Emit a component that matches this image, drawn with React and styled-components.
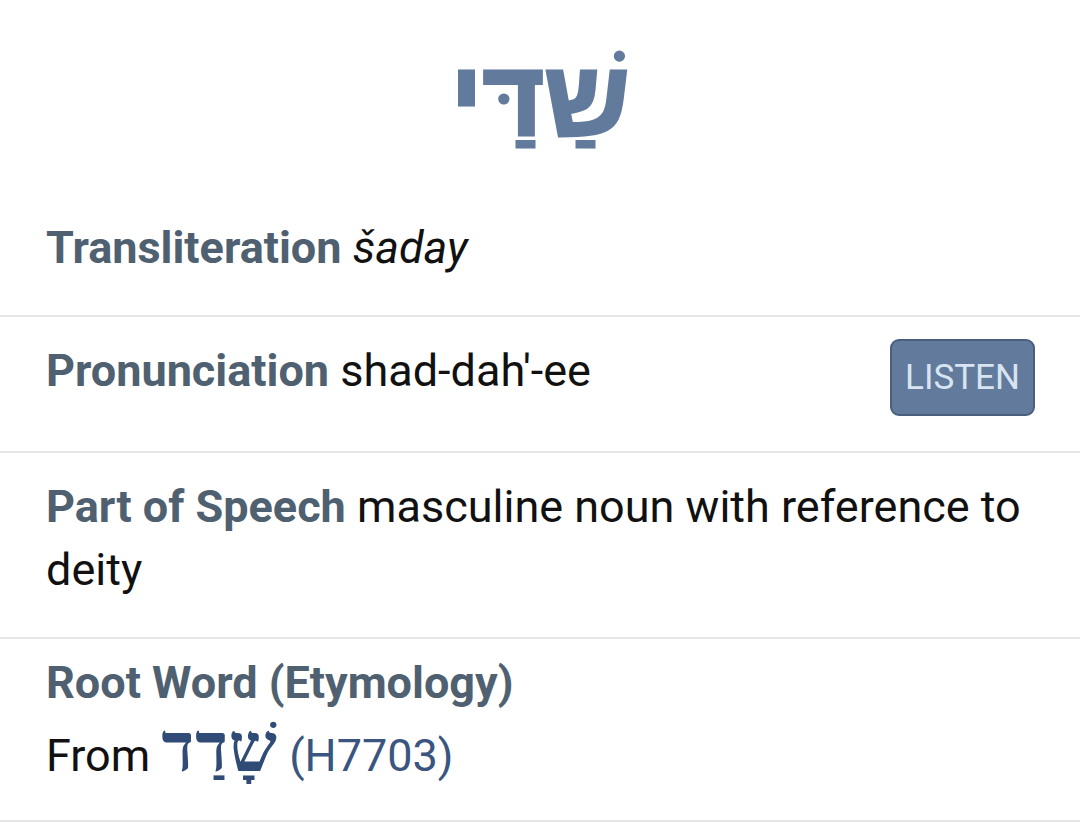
import styled, { createGlobalStyle } from "styled-components";

const GlobalStyle = createGlobalStyle`
  body {
    margin: 0;
    background: #ffffff;
    font-family: Roboto, "Liberation Sans", sans-serif;
  }
`;

const Page = styled.div`
  width: 1080px;
  background: #ffffff;
`;

const Headword = styled.h1`
  margin: 0;
  padding: 38px 0 36px;
  text-align: center;
  font-family: "Liberation Sans", "DejaVu Sans", sans-serif;
  font-weight: bold;
  font-size: 106px;
  line-height: 120px;
  color: #627a9c;
  -webkit-text-stroke: 3px #627a9c;
  text-shadow: 0 0 3px #e4ecf6;
`;

const Row = styled.div`
  display: flex;
  align-items: flex-start;
  justify-content: space-between;
  gap: 24px;
  padding: 22px 45px ${(p) => p.$bottom || "36px"} 46px;
  border-bottom: 2px solid #e6e6e6;
  font-size: 45px;
  line-height: 63px;
  color: #111111;
`;

const Text = styled.div`
  flex: 1;
`;

const Label = styled.span`
  font-weight: bold;
  color: #4f6070;
`;

const BlockLabel = styled(Label)`
  display: block;
  line-height: 43px;
`;

const Line = styled.div`
  margin-top: 20px;
`;

const Value = styled.span`
  font-style: ${(p) => (p.$italic ? "italic" : "normal")};
`;

const ListenButton = styled.button`
  flex: none;
  width: 145px;
  height: 77px;
  padding: 0;
  border: 2px solid #4a5f7e;
  border-radius: 9px;
  background: #627a9c;
  color: #d9e4f2;
  font-family: Roboto, sans-serif;
  font-size: 35px;
  text-transform: uppercase;
  cursor: pointer;
`;

const HebrewLink = styled.a`
  color: #3a5580;
  text-decoration: none;
`;

const HebrewWord = styled.span`
  font-family: "Liberation Serif", "DejaVu Serif", serif;
  font-weight: bold;
  font-size: 68px;
  line-height: 0;
  letter-spacing: 1px;
  color: #2f4b76;
`;

export default function App() {
  return (
    <Page>
      <GlobalStyle />
      <Headword lang="he" dir="rtl">שַׁדַּי</Headword>

      <Row>
        <Text>
          <Label>Transliteration</Label> <Value $italic>šaday</Value>
        </Text>
      </Row>

      <Row $bottom="35px">
        <Text>
          <Label>Pronunciation</Label> <Value>shad-dah'-ee</Value>
        </Text>
        <ListenButton>Listen</ListenButton>
      </Row>

      <Row>
        <Text>
          <Label>Part of Speech</Label>{" "}
          <Value>masculine noun with reference to deity</Value>
        </Text>
      </Row>

      <Row $bottom="33px">
        <Text>
          <BlockLabel>Root Word (Etymology)</BlockLabel>
          <Line>
            From{" "}
            <HebrewLink href="#">
              <HebrewWord lang="he">שָׁדַד</HebrewWord> (H7703)
            </HebrewLink>
          </Line>
        </Text>
      </Row>
    </Page>
  );
}
